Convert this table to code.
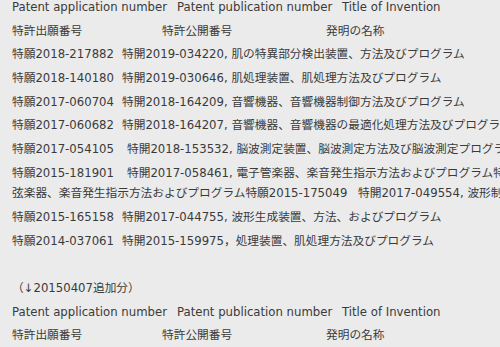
const rowsTop = [
  ['特願2018-217882', '特開2019-034220, 肌の特異部分検出装置、方法及びプログラム', 'w-[110px]'],
  ['特願2018-140180', '特開2019-030646, 肌処理装置、肌処理方法及びプログラム', 'w-[110px]'],
  ['特願2017-060704', '特開2018-164209, 音響機器、音響機器制御方法及びプログラム', 'w-[110px]'],
  ['特願2017-060682', '特開2018-164207, 音響機器、音響機器の最適化処理方法及びプログラム', 'w-[110px]'],
  ['特願2017-054105', '特開2018-153532, 脳波測定装置、脳波測定方法及び脳波測定プログラム', 'w-[115px]'],
];

const rowsBottom = [
  ['特願2015-165158', '特開2017-044755, 波形生成装置、方法、およびプログラム', 'w-[110px]'],
  ['特願2014-037061', '特開2015-159975，処理装置、肌処理方法及びプログラム', 'w-[110px]'],
];

function Line({ children }) {
  return <div className="h-[20.4px] leading-[20.4px] mb-[3.3px] whitespace-nowrap">{children}</div>;
}

function HeaderRows() {
  return (
    <>
      <Line>
        <span className="inline-block w-[165px]">Patent application number</span>
        <span className="inline-block w-[165px]">Patent publication number</span>
        <span>Title of Invention</span>
      </Line>
      <Line>
        <span className="inline-block w-[150px]">特許出願番号</span>
        <span className="inline-block w-[164px]">特許公開番号</span>
        <span>発明の名称</span>
      </Line>
    </>
  );
}

function PatentRow({ row }) {
  const [app, rest, width] = row;
  return (
    <Line>
      <span className={`inline-block ${width}`}>{app}</span>
      <span>{rest}</span>
    </Line>
  );
}

export default function App() {
  return (
    <div className="w-[500px] h-[347px] overflow-hidden bg-[#ebebeb] text-[#3a3a3a] text-[11.7px] font-['DejaVu_Sans','Noto_Sans_CJK_JP',sans-serif]">
      <div className="-mt-[3px] pl-[12px]">
        <HeaderRows />
        {rowsTop.map(r => <PatentRow key={r[0]} row={r} />)}

        <div className="mb-[3.3px] whitespace-nowrap">
          <div className="h-[20.4px] leading-[20.4px]">
            <span className="inline-block w-[115px]">特願2015-181901</span>
            <span>特開2017-058461, 電子管楽器、楽音発生指示方法およびプログラム特願2015-175048 特開2017-049553, 電子</span>
          </div>
          <div className="h-[20.4px] leading-[20.4px]">
            <span className="inline-block w-[346px]">弦楽器、楽音発生指示方法およびプログラム特願2015-175049</span>
            <span>特開2017-049554, 波形制御装置、方法、およびプログラム</span>
          </div>
        </div>

        {rowsBottom.map(r => <PatentRow key={r[0]} row={r} />)}

        <Line>&nbsp;</Line>
        <Line>（↓20150407追加分）</Line>
        <HeaderRows />
      </div>
    </div>
  );
}
